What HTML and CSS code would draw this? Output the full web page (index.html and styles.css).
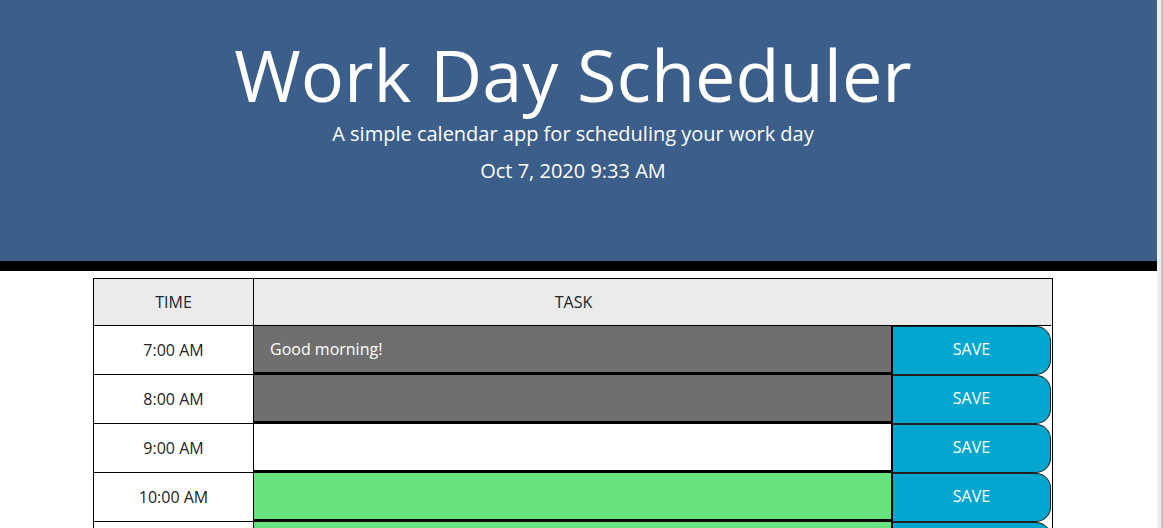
FILE: index.html
```html
<!DOCTYPE html>
<html lang="en">
<head>
<meta charset="utf-8">
<title>Work Day Scheduler</title>
<link rel="stylesheet" href="styles.css">
</head>
<body>
<div class="page">
  <main class="main">
    <header class="jumbo">
      <div class="jumbo-inner">
        <h1 class="title">Work Day Scheduler</h1>
        <p class="lead">A simple calendar app for scheduling your work day</p>
        <p class="date">Oct 7, 2020 9:33 AM</p>
      </div>
    </header>
    <div class="content">
      <section class="planner">
        <div class="row head">
          <div class="cell time">TIME</div>
          <div class="cell task-head">TASK</div>
          <div class="cell save-head"></div>
        </div>
        <div class="row">
          <div class="cell time">7:00 AM</div>
          <div class="cell task past">Good morning!</div>
          <div class="save">SAVE</div>
        </div>
        <div class="row">
          <div class="cell time">8:00 AM</div>
          <div class="cell task past"></div>
          <div class="save">SAVE</div>
        </div>
        <div class="row">
          <div class="cell time">9:00 AM</div>
          <div class="cell task present"></div>
          <div class="save">SAVE</div>
        </div>
        <div class="row">
          <div class="cell time">10:00 AM</div>
          <div class="cell task future"></div>
          <div class="save">SAVE</div>
        </div>
        <div class="row">
          <div class="cell time">11:00 AM</div>
          <div class="cell task future"></div>
          <div class="save">SAVE</div>
        </div>
        <div class="row">
          <div class="cell time">12:00 PM</div>
          <div class="cell task future"></div>
          <div class="save">SAVE</div>
        </div>
      </section>
    </div>
  </main>
  <div class="scrollbar"><span class="track"></span><span class="thumb"></span></div>
</div>
</body>
</html>
```
FILE: styles.css
```css
html, body {
  margin: 0;
  padding: 0;
  height: 100%;
  overflow: hidden;
}
body {
  font-family: "Open Sans", "DejaVu Sans", sans-serif;
  color: #212529;
  background: #fff;
}
.page {
  display: flex;
  height: 528px;
}
.main {
  flex: 1;
  min-width: 0;
}
.scrollbar {
  width: 6px;
  display: flex;
  background: #fbfbfb;
  border-left: 1px solid #f4f4f4;
  box-sizing: border-box;
}
.scrollbar .track {
  flex: 1;
  background: #ececec;
}
.scrollbar .thumb {
  width: 2px;
  background: #c6c6c6;
}
.jumbo {
  background: #3b5e8b;
  height: 261px;
  border-bottom: 10px solid #000;
}
.jumbo-inner {
  margin-right: 11px;
  padding-top: 35px;
  text-align: center;
  color: #fff;
}
.title {
  margin: 0 0 9px;
  font-size: 72px;
  line-height: 78px;
  font-weight: 400;
}
.lead {
  margin: 0 0 13px;
  font-size: 20px;
  line-height: 24px;
}
.date {
  margin: 0;
  font-size: 20px;
  line-height: 24px;
}
.content {
  padding: 7px 11px 0 0;
  display: flex;
  justify-content: center;
}
.planner {
  width: 960px;
  box-sizing: border-box;
  border: 1px solid #000;
  border-bottom: none;
}
.row {
  display: grid;
  grid-template-columns: 160px 639px 158px 1px;
  height: 49px;
}
.row.head {
  height: 47px;
  background: #ebebeb;
}
.cell {
  box-sizing: border-box;
  display: flex;
  align-items: center;
  font-size: 16px;
}
.time {
  justify-content: center;
  border-right: 1px solid #000;
  border-bottom: 1px solid #000;
  background: #fff;
}
.head .time {
  background: #ebebeb;
}
.task-head {
  justify-content: center;
  border-bottom: 1px solid #000;
  grid-column: 2 / 4;
  padding-right: 158px;
}
.save-head {
  display: none;
}
.task {
  border-right: 2px solid #000;
  border-bottom: 3px solid #000;
  padding: 0 16px;
  color: #fff;
}
.past { background: #6f6f6f; }
.present { background: #fff; }
.future { background: #66e37e; }
.save {
  box-sizing: border-box;
  background: #03a6ce;
  color: #fff;
  font-size: 16px;
  padding-bottom: 3px;
  display: flex;
  align-items: center;
  justify-content: center;
  border: 1.5px solid #222;
  border-left: none;
  border-radius: 0 15px 15px 0;
}
```
